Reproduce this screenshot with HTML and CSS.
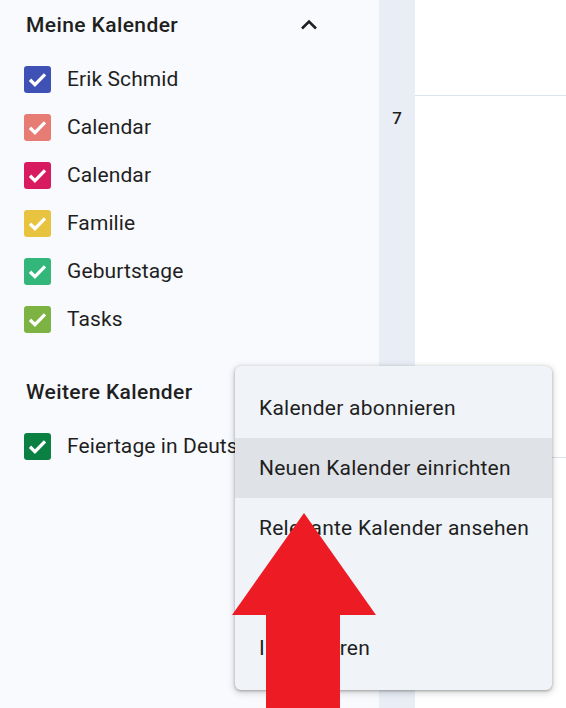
FILE: index.html
```html
<!DOCTYPE html>
<html lang="de">
<head>
<meta charset="utf-8">
<title>Kalender</title>
<link rel="stylesheet" href="styles.css">
</head>
<body>
<div class="app">
  <aside class="sidebar">
    <div class="section-head">
      <span class="section-title">Meine Kalender</span>
      <svg class="chevron" width="24" height="24" viewBox="0 0 24 24"><path d="M5 15.5 L12 8.5 L19 15.5" fill="none" stroke="#1f1f1f" stroke-width="2.6"/></svg>
    </div>
    <ul class="cal-list">
      <li class="cal-item"><span class="cb c-blue"><svg viewBox="0 0 18 18"><path d="M4 9.2 L7.3 12.4 L14 5.6" /></svg></span>Erik Schmid</li>
      <li class="cal-item"><span class="cb c-salmon"><svg viewBox="0 0 18 18"><path d="M4 9.2 L7.3 12.4 L14 5.6" /></svg></span>Calendar</li>
      <li class="cal-item"><span class="cb c-pink"><svg viewBox="0 0 18 18"><path d="M4 9.2 L7.3 12.4 L14 5.6" /></svg></span>Calendar</li>
      <li class="cal-item"><span class="cb c-yellow"><svg viewBox="0 0 18 18"><path d="M4 9.2 L7.3 12.4 L14 5.6" /></svg></span>Familie</li>
      <li class="cal-item"><span class="cb c-green"><svg viewBox="0 0 18 18"><path d="M4 9.2 L7.3 12.4 L14 5.6" /></svg></span>Geburtstage</li>
      <li class="cal-item"><span class="cb c-lime"><svg viewBox="0 0 18 18"><path d="M4 9.2 L7.3 12.4 L14 5.6" /></svg></span>Tasks</li>
    </ul>
    <div class="section-head second">
      <span class="section-title">Weitere Kalender</span>
    </div>
    <ul class="cal-list">
      <li class="cal-item"><span class="cb c-dark"><svg viewBox="0 0 18 18"><path d="M4 9.2 L7.3 12.4 L14 5.6" /></svg></span>Feiertage in Deutschland</li>
    </ul>
  </aside>
  <div class="strip">
    <span class="week">7</span>
  </div>
  <main class="grid">
    <div class="row first"></div>
    <div class="row"></div>
    <div class="row last"></div>
  </main>
</div>

<div class="menu">
  <div class="menu-item">Kalender abonnieren</div>
  <div class="menu-item active">Neuen Kalender einrichten</div>
  <div class="menu-item">Relevante Kalender ansehen</div>
  <div class="menu-item"></div>
  <div class="menu-item">Importieren</div>
</div>

<svg class="arrow" width="146" height="195" viewBox="0 0 146 195">
  <polygon points="72,0 144,102 108,102 108,195 34,195 34,102 0,102" fill="#ed1c24"/>
</svg>
</body>
</html>
```

FILE: styles.css
```css
html, body {
  margin: 0;
  padding: 0;
}
body {
  width: 566px;
  height: 708px;
  overflow: hidden;
  position: relative;
  font-family: Roboto, "Noto Sans", Arial, sans-serif;
  color: #1f1f1f;
  background: #ffffff;
}
.app {
  display: flex;
  height: 708px;
  overflow: hidden;
}
.sidebar {
  width: 379px;
  flex: none;
  background: #f8fafd;
  padding-left: 24px;
  box-sizing: border-box;
  overflow: hidden;
}
.section-head {
  height: 50px;
  display: flex;
  align-items: center;
  justify-content: space-between;
  padding-left: 2px;
  padding-right: 58px;
}
.section-head.second {
  margin-top: 24px;
  height: 50px;
}
.section-title {
  font-size: 21px;
  font-weight: 500;
  letter-spacing: 0.4px;
}
.chevron {
  display: block;
}
.cal-list {
  list-style: none;
  margin: 5px 0 0 0;
  padding: 0;
}
.cal-item {
  height: 48px;
  display: flex;
  align-items: center;
  font-size: 21px;
  letter-spacing: 0.1px;
  white-space: nowrap;
}
.cb {
  width: 27px;
  height: 27px;
  border-radius: 3px;
  margin-right: 16px;
  display: flex;
  align-items: center;
  justify-content: center;
  flex: none;
}
.cb svg {
  width: 27px;
  height: 27px;
}
.cb path {
  fill: none;
  stroke: #ffffff;
  stroke-width: 2.2;
}
.c-blue { background: #3f51b5; }
.c-salmon { background: #e67c73; }
.c-pink { background: #d81b60; }
.c-yellow { background: #e8c340; }
.c-green { background: #33b679; }
.c-lime { background: #7cb342; }
.c-dark { background: #0b8043; }

.strip {
  width: 36px;
  flex: none;
  background: #e9eef6;
  display: flex;
  flex-direction: column;
  align-items: center;
  padding-top: 108px;
  box-sizing: border-box;
}
.week {
  font-size: 17px;
  font-weight: 500;
  line-height: 20px;
}
.grid {
  flex: 1;
  display: flex;
  flex-direction: column;
}
.row {
  height: 361px;
  border-bottom: 1px solid #dde3ea;
  flex: none;
}
.row.first {
  height: 95px;
}
.row.last {
  flex: 1;
  height: auto;
  border-bottom: none;
}

.menu {
  position: absolute;
  left: 235px;
  top: 366px;
  width: 317px;
  height: 324px;
  box-sizing: border-box;
  padding: 12px 0;
  background: #f0f4f9;
  border-radius: 6px;
  box-shadow: 0 1px 3px rgba(0,0,0,0.3), 0 2px 6px 2px rgba(0,0,0,0.12);
}
.menu-item {
  height: 60px;
  display: flex;
  align-items: center;
  padding-left: 24px;
  font-size: 21px;
  letter-spacing: 0.25px;
  color: #1f1f1f;
  white-space: nowrap;
}
.menu-item.active {
  background: #dfe3e8;
}
.arrow {
  position: absolute;
  left: 232px;
  top: 513px;
}
```
